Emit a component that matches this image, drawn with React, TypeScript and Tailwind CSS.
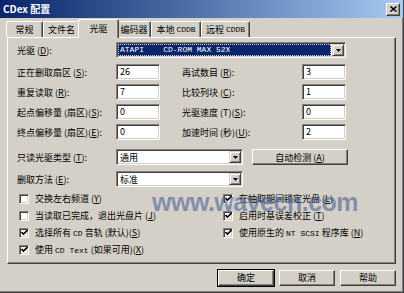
import type { ReactNode } from "react";

// Win2000-style "CDex 配置" dialog, 光驱 tab

const sunken =
  "border border-t-[#808080] border-l-[#808080] border-r-white border-b-white shadow-[inset_1px_1px_0_#404040,inset_-1px_-1px_0_#d4d0c8]";
const raised =
  "border border-t-white border-l-white border-r-[#404040] border-b-[#404040] shadow-[inset_-1px_-1px_0_#808080]";

function M({ children }: { children: ReactNode }) {
  return <span className="font-['Liberation_Mono',monospace] text-[8px]">{children}</span>;
}

function K({ children }: { children: ReactNode }) {
  return (
    <>
      (<span className="underline">{children}</span>)
    </>
  );
}

function Field({ value }: { value: string }) {
  return (
    <div className={`h-[16px] w-[44px] bg-white ${sunken} pl-[3px] text-[9px] leading-[14px] text-black`}>
      {value}
    </div>
  );
}

function DropBtn() {
  return (
    <div className="h-full w-[12px] bg-[#d4d0c8] border border-t-[#d4d0c8] border-l-[#d4d0c8] border-r-[#404040] border-b-[#404040] shadow-[inset_1px_1px_0_white,inset_-1px_-1px_0_#808080] flex items-center justify-center">
      <svg width="5" height="3" viewBox="0 0 5 3">
        <path d="M0 0h5L2.5 3z" fill="#000" />
      </svg>
    </div>
  );
}

function Select({ value, width, active }: { value: ReactNode; width: string; active?: boolean }) {
  return (
    <div className={`h-[16px] ${width} bg-white ${sunken} flex p-[1px]`}>
      <div
        className={`flex-1 flex items-center pl-[2px] text-[9px] leading-none whitespace-pre ${
          active ? "bg-[#0a246a] text-white mr-[1px] outline-1 outline-dotted outline-[#d4d0c8] -outline-offset-1" : "text-black"
        }`}
      >
        {value}
      </div>
      <DropBtn />
    </div>
  );
}

function Check({ checked, children }: { checked?: boolean; children: ReactNode }) {
  return (
    <div className="h-[17px] flex items-center gap-[6px]">
      <div className={`w-[10px] h-[10px] bg-white ${sunken} flex items-center justify-center`}>
        {checked && (
          <svg width="7" height="7" viewBox="0 0 7 7">
            <path d="M0.5 3L2.5 5L6.5 1" stroke="#000" strokeWidth="1.6" fill="none" />
          </svg>
        )}
      </div>
      <span className="text-[9px] leading-none text-black whitespace-nowrap">{children}</span>
    </div>
  );
}

function Button({ children, def }: { children: ReactNode; def?: boolean }) {
  return (
    <div
      className={`w-[56px] h-[16px] flex items-center justify-center text-[9px] text-black ${
        def ? "outline outline-1 outline-black" : ""
      } ${raised}`}
    >
      {children}
    </div>
  );
}

const tabs = [
  { label: "常规", w: "w-[37px]" },
  { label: "文件名", w: "w-[37px]" },
  { label: "光驱", w: "w-[37px]", active: true },
  { label: "编码器", w: "w-[34px]" },
  { label: <>本地&nbsp;<M>CDDB</M></>, w: "w-[50px]" },
  { label: <>远程&nbsp;<M>CDDB</M></>, w: "w-[49px]" },
];

export default function App() {
  return (
    <div className="relative w-[404px] h-[293px] overflow-hidden bg-[#d4d0c8] font-['Noto_Sans_CJK_SC','Noto_Sans',sans-serif] border-r border-b border-r-[#404040] border-b-[#404040] shadow-[inset_-1px_-1px_0_#808080] flex flex-col">
      {/* title bar */}
      <div className="h-[18px] shrink-0 bg-gradient-to-r from-[#0a246a] to-[#a6caf0] flex items-center justify-between pl-[3px] pr-[3px]">
        <span className="text-white font-bold text-[10px] leading-none">CDex 配置</span>
        <div className={`w-[14px] h-[13px] bg-[#d4d0c8] ${raised} flex items-center justify-center`}>
          <svg width="7" height="6" viewBox="0 0 7 6">
            <path d="M0.5 0.5L6.5 5.5M6.5 0.5L0.5 5.5" stroke="#000" strokeWidth="1.5" />
          </svg>
        </div>
      </div>

      {/* tabs */}
      <div className="h-[19px] shrink-0 flex items-end pl-[6px]">
        {tabs.map((t, i) => (
          <div
            key={i}
            className={`${t.w} flex items-center justify-center text-[9px] text-black leading-none border-t border-l border-r border-t-white border-l-white border-r-[#404040] rounded-t-[2px] shadow-[inset_-1px_0_0_#808080] ${
              t.active ? "h-[19px] -mb-[1px] -mx-[2px] w-[41px] bg-[#d4d0c8] z-10 relative pb-[2px]" : "h-[16px]"
            }`}
          >
            {t.label}
          </div>
        ))}
      </div>

      {/* panel */}
      <div className="mx-[7px] h-[227px] shrink-0 border border-t-white border-l-white border-r-[#404040] border-b-[#404040] shadow-[inset_-1px_-1px_0_#808080] pl-[9px] pt-[4px] text-[9px] text-black leading-none">
        <div className="flex items-center h-[16px]">
          <span className="w-[99px]">光驱 <K>D</K>:</span>
          <Select value={<M>{"ATAPI    CD-ROM MAX 52X"}</M>} width="w-[230px]" active />
        </div>

        <div className="mt-[6px] flex flex-col gap-[4px]">
          {[
            [<>正在删取扇区 <K>S</K>:</>, "26", <>再试数目 <K>R</K>:</>, "3"],
            [<>重复读取 <K>R</K>:</>, "7", <>比较列块 <K>C</K>:</>, "1"],
            [<>起点偏移量 (扇区)<K>S</K>:</>, "0", <>光驱速度 (T)<K>S</K>:</>, "0"],
            [<>终点偏移量 (扇区)<K>E</K>:</>, "0", <>加速时间 (秒)<K>U</K>:</>, "2"],
          ].map((r, i) => (
            <div key={i} className="flex items-center h-[16px]">
              <span className="w-[99px] whitespace-nowrap">{r[0]}</span>
              <Field value={r[1] as string} />
              <span className="ml-[22px] w-[120px] whitespace-nowrap">{r[2]}</span>
              <Field value={r[3] as string} />
            </div>
          ))}
        </div>

        <div className="mt-[9px] flex items-center h-[16px]">
          <span className="w-[99px]">只读光驱类型 <K>T</K>:</span>
          <Select value="通用" width="w-[127px]" />
          <div className="ml-[9px] w-[96px] h-[16px] flex items-center justify-center border border-t-white border-l-white border-r-[#404040] border-b-[#404040] shadow-[inset_-1px_-1px_0_#808080]">
            自动检测 <K>A</K>
          </div>
        </div>

        <div className="mt-[6px] flex items-center h-[16px]">
          <span className="w-[99px]">删取方法 <K>E</K>:</span>
          <Select value="标准" width="w-[127px]" />
        </div>

        <div className="mt-[3px] pl-[2px] flex">
          <div className="w-[204px] flex flex-col">
            <Check>交换左右频道 <K>Y</K></Check>
            <Check>当读取已完成，退出光盘片 <K>J</K></Check>
            <Check checked>
              选择所有 <M>CD</M> 音轨 (默认)<K>S</K>
            </Check>
            <Check checked>
              使用 <M>CD Text</M> (如果可用)<K>X</K>
            </Check>
          </div>
          <div className="flex flex-col">
            <Check checked>在抽取期间锁定光盘 <K>L</K></Check>
            <Check checked>启用时基误差校正 <K>T</K></Check>
            <Check checked>
              使用原生的 <M>NT SCSI</M> 程序库 <K>N</K>
            </Check>
          </div>
        </div>
      </div>

      {/* buttons */}
      <div className="mt-[6px] flex justify-end gap-[5px] pr-[7px]">
        <Button def>确定</Button>
        <Button>取消</Button>
        <Button>帮助</Button>
      </div>

      {/* watermark */}
      <div className="absolute left-[152px] top-[190px] pointer-events-none font-['Liberation_Sans',sans-serif] font-bold text-[25px] leading-none text-[#4a6198]/60 tracking-[-0.5px]">
        www.wavecn.com
      </div>
    </div>
  );
}
